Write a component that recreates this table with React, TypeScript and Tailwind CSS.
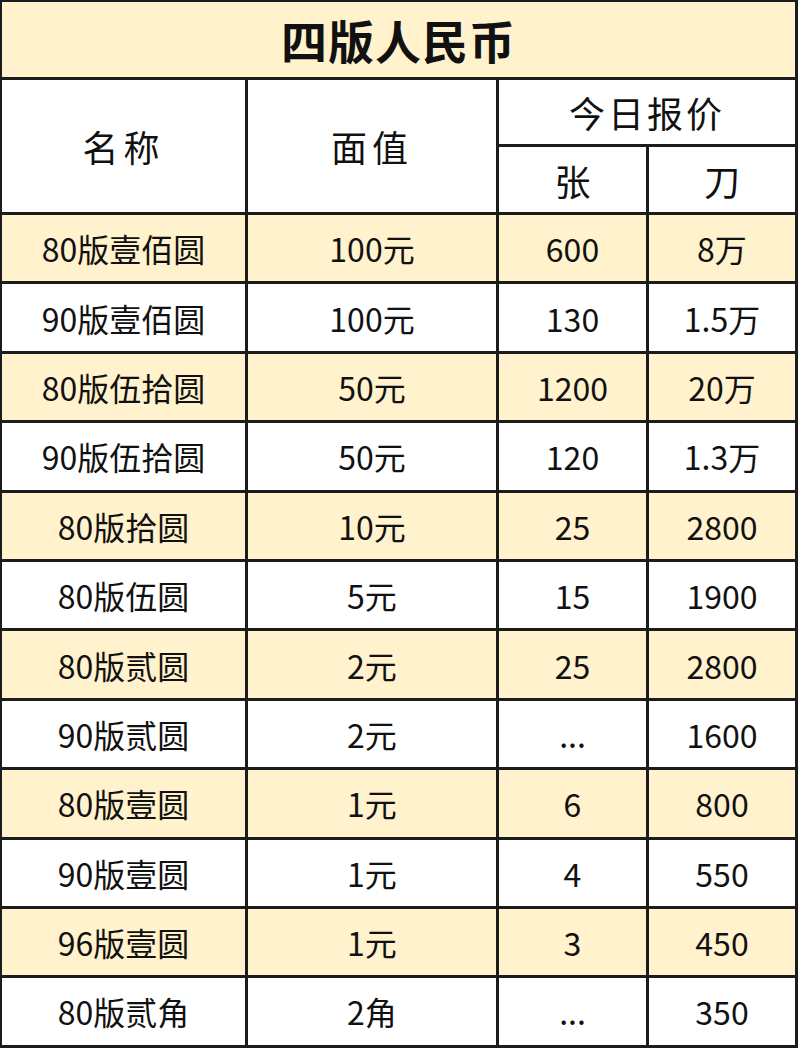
const rows: [string, string, string, string][] = [
  ["80版壹佰圆", "100元", "600", "8万"],
  ["90版壹佰圆", "100元", "130", "1.5万"],
  ["80版伍拾圆", "50元", "1200", "20万"],
  ["90版伍拾圆", "50元", "120", "1.3万"],
  ["80版拾圆", "10元", "25", "2800"],
  ["80版伍圆", "5元", "15", "1900"],
  ["80版贰圆", "2元", "25", "2800"],
  ["90版贰圆", "2元", "...", "1600"],
  ["80版壹圆", "1元", "6", "800"],
  ["90版壹圆", "1元", "4", "550"],
  ["96版壹圆", "1元", "3", "450"],
  ["80版贰角", "2角", "...", "350"],
];

function Cell({
  children,
  className = "",
}: {
  children: React.ReactNode;
  className?: string;
}) {
  return (
    <div className={`flex items-center justify-center ${className}`}>
      {children}
    </div>
  );
}

export default function App() {
  return (
    <div className="h-[1049px] w-[800px] bg-white font-['Noto_Sans_CJK_SC','Noto_Sans',sans-serif] text-[#111]">
      <div className="grid w-[798px] grid-cols-[243px_248px_147px_146px] grid-rows-[75px_64px_65px_repeat(12,66.4px)] gap-[3px] bg-[#1c1c1c] pb-[3px] pl-[2px] pr-[3px] pt-[2px]">
        <Cell className="col-span-4 bg-[#fff2cc] text-[46px] font-bold tracking-[1px]">
          四版人民币
        </Cell>
        <Cell className="row-span-2 bg-white text-[36px] tracking-[5px]">
          名称
        </Cell>
        <Cell className="row-span-2 bg-white text-[36px] tracking-[5px]">
          面值
        </Cell>
        <Cell className="col-span-2 bg-white text-[36px] tracking-[3px]">
          今日报价
        </Cell>
        <Cell className="bg-white text-[36px]">张</Cell>
        <Cell className="bg-white text-[36px]">刀</Cell>
        {rows.map((r, i) =>
          r.map((v, j) => (
            <Cell
              key={`${i}-${j}`}
              className={`text-[32px] ${i % 2 === 0 ? "bg-[#fff2cc]" : "bg-white"}`}
            >
              {v}
            </Cell>
          )),
        )}
      </div>
    </div>
  );
}
